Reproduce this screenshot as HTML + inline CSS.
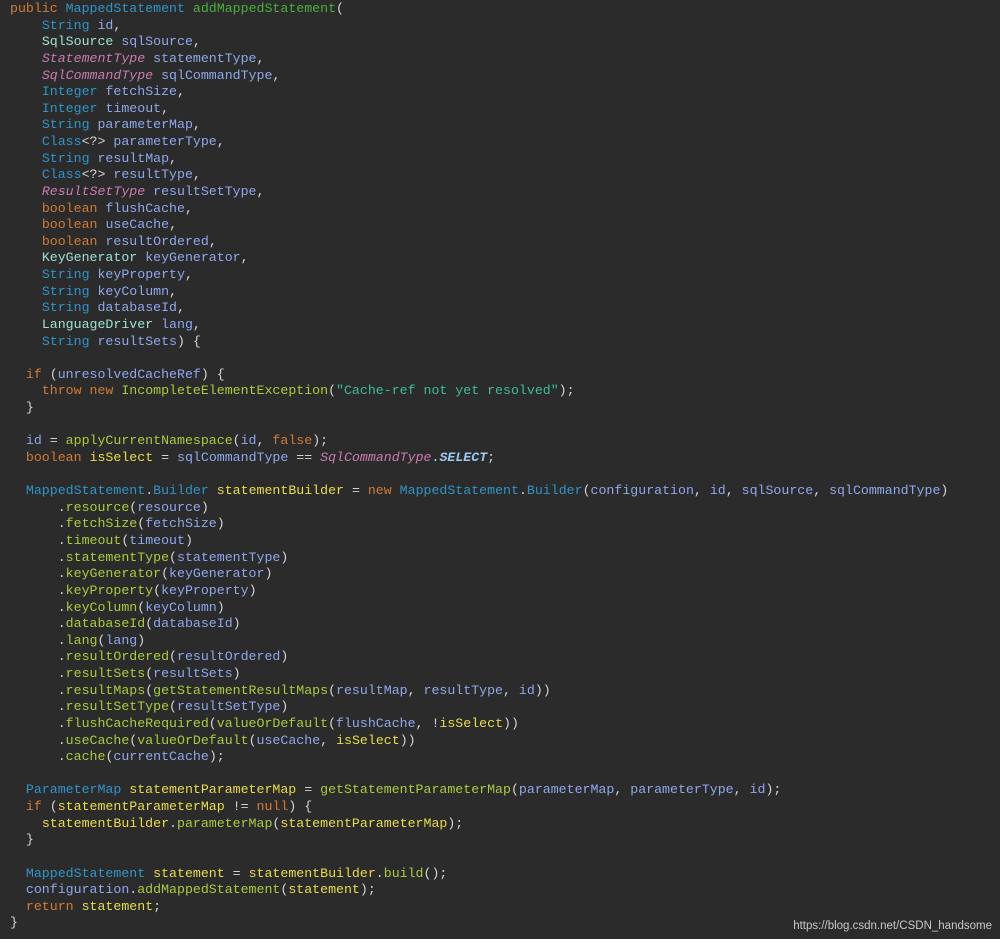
<!DOCTYPE html>
<html><head><meta charset="utf-8"><style>
html,body{margin:0;padding:0;background:#2b2b2b;width:1000px;height:939px;overflow:hidden}
pre{margin:0;padding:1px 0 0 10px;font-family:"Liberation Mono",monospace;font-size:13.25px;line-height:16.63px;color:#d4d4d4;white-space:pre}
.k{color:#d27b35}.t{color:#2f95c9}.c{color:#9fe0d2}.e{color:#c97bb0;font-style:italic}.p{color:#8fa8ec}
.m{color:#4caf3a}.f{color:#a8cc3c}.v{color:#e8dc4a}.s{color:#3cbc9c}.st{color:#9cc8f2;font-style:italic;font-weight:bold}
.wm{position:absolute;right:8px;top:920px;font-family:"Liberation Sans",sans-serif;font-size:11.5px;color:#c8c8c8}
</style></head><body><pre><span class="k">public</span> <span class="t">MappedStatement</span> <span class="m">addMappedStatement</span>(
    <span class="t">String</span> <span class="p">id</span>,
    <span class="c">SqlSource</span> <span class="p">sqlSource</span>,
    <span class="e">StatementType</span> <span class="p">statementType</span>,
    <span class="e">SqlCommandType</span> <span class="p">sqlCommandType</span>,
    <span class="t">Integer</span> <span class="p">fetchSize</span>,
    <span class="t">Integer</span> <span class="p">timeout</span>,
    <span class="t">String</span> <span class="p">parameterMap</span>,
    <span class="t">Class</span>&lt;?&gt; <span class="p">parameterType</span>,
    <span class="t">String</span> <span class="p">resultMap</span>,
    <span class="t">Class</span>&lt;?&gt; <span class="p">resultType</span>,
    <span class="e">ResultSetType</span> <span class="p">resultSetType</span>,
    <span class="k">boolean</span> <span class="p">flushCache</span>,
    <span class="k">boolean</span> <span class="p">useCache</span>,
    <span class="k">boolean</span> <span class="p">resultOrdered</span>,
    <span class="c">KeyGenerator</span> <span class="p">keyGenerator</span>,
    <span class="t">String</span> <span class="p">keyProperty</span>,
    <span class="t">String</span> <span class="p">keyColumn</span>,
    <span class="t">String</span> <span class="p">databaseId</span>,
    <span class="c">LanguageDriver</span> <span class="p">lang</span>,
    <span class="t">String</span> <span class="p">resultSets</span>) {

  <span class="k">if</span> (<span class="p">unresolvedCacheRef</span>) {
    <span class="k">throw</span> <span class="k">new</span> <span class="f">IncompleteElementException</span>(<span class="s">"Cache-ref not yet resolved"</span>);
  }

  <span class="p">id</span> = <span class="f">applyCurrentNamespace</span>(<span class="p">id</span>, <span class="k">false</span>);
  <span class="k">boolean</span> <span class="v">isSelect</span> = <span class="p">sqlCommandType</span> == <span class="e">SqlCommandType</span>.<span class="st">SELECT</span>;

  <span class="t">MappedStatement</span>.<span class="t">Builder</span> <span class="v">statementBuilder</span> = <span class="k">new</span> <span class="t">MappedStatement</span>.<span class="t">Builder</span>(<span class="p">configuration</span>, <span class="p">id</span>, <span class="p">sqlSource</span>, <span class="p">sqlCommandType</span>)
      .<span class="f">resource</span>(<span class="p">resource</span>)
      .<span class="f">fetchSize</span>(<span class="p">fetchSize</span>)
      .<span class="f">timeout</span>(<span class="p">timeout</span>)
      .<span class="f">statementType</span>(<span class="p">statementType</span>)
      .<span class="f">keyGenerator</span>(<span class="p">keyGenerator</span>)
      .<span class="f">keyProperty</span>(<span class="p">keyProperty</span>)
      .<span class="f">keyColumn</span>(<span class="p">keyColumn</span>)
      .<span class="f">databaseId</span>(<span class="p">databaseId</span>)
      .<span class="f">lang</span>(<span class="p">lang</span>)
      .<span class="f">resultOrdered</span>(<span class="p">resultOrdered</span>)
      .<span class="f">resultSets</span>(<span class="p">resultSets</span>)
      .<span class="f">resultMaps</span>(<span class="f">getStatementResultMaps</span>(<span class="p">resultMap</span>, <span class="p">resultType</span>, <span class="p">id</span>))
      .<span class="f">resultSetType</span>(<span class="p">resultSetType</span>)
      .<span class="f">flushCacheRequired</span>(<span class="f">valueOrDefault</span>(<span class="p">flushCache</span>, !<span class="v">isSelect</span>))
      .<span class="f">useCache</span>(<span class="f">valueOrDefault</span>(<span class="p">useCache</span>, <span class="v">isSelect</span>))
      .<span class="f">cache</span>(<span class="p">currentCache</span>);

  <span class="t">ParameterMap</span> <span class="v">statementParameterMap</span> = <span class="f">getStatementParameterMap</span>(<span class="p">parameterMap</span>, <span class="p">parameterType</span>, <span class="p">id</span>);
  <span class="k">if</span> (<span class="v">statementParameterMap</span> != <span class="k">null</span>) {
    <span class="v">statementBuilder</span>.<span class="f">parameterMap</span>(<span class="v">statementParameterMap</span>);
  }

  <span class="t">MappedStatement</span> <span class="v">statement</span> = <span class="v">statementBuilder</span>.<span class="f">build</span>();
  <span class="p">configuration</span>.<span class="f">addMappedStatement</span>(<span class="v">statement</span>);
  <span class="k">return</span> <span class="v">statement</span>;
}</pre><div class="wm">https://blog.csdn.net/CSDN_handsome</div></body></html>
